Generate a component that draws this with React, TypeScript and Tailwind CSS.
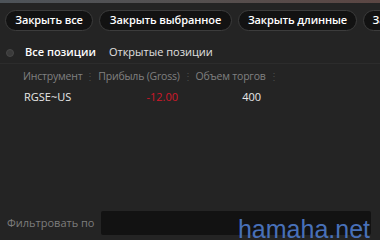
import React from "react";

const font = { fontFamily: '"Open Sans", "Noto Sans", sans-serif' };

function Btn({ label, w }: { label: string; w: string }) {
  return (
    <div
      className={`h-[21px] ${w} shrink-0 rounded-full border border-[#3c3c3c] bg-[#121212] flex items-center justify-center text-[11px] font-semibold text-white whitespace-nowrap tracking-[-0.1px]`}
    >
      {label}
    </div>
  );
}

function Sep() {
  return <span className="text-[#4a4a4a] text-[10px] mx-[3px]">⋮</span>;
}

export default function App() {
  return (
    <div className="w-[380px] h-[240px] bg-[#242424] relative overflow-hidden flex flex-col" style={font}>
      <div className="h-[3px] w-full bg-gradient-to-r from-[#4d5359] via-[#545050] to-[#5b4643]" />
      <div className="flex gap-[6px] pl-[5px] pt-[7px]">
        <Btn label="Закрыть все" w="w-[88px]" />
        <Btn label="Закрыть выбранное" w="w-[133px]" />
        <Btn label="Закрыть длинные" w="w-[119px]" />
        <Btn label="Закрыть короткие" w="w-[120px]" />
      </div>
      <div className="flex items-center pl-[6px] pt-[11px] h-[33px] border-b border-[#2c2c2c]">
        <div className="w-[8px] h-[8px] rounded-full bg-[#3a3a3a] border border-[#474747]" />
        <span className="ml-[11px] text-[11px] font-semibold text-white">Все позиции</span>
        <span className="ml-[13px] text-[11px] text-[#e0e0e0]">Открытые позиции</span>
      </div>
      <div className="flex items-center pl-[23px] pt-[5px] text-[10.5px] tracking-[-0.2px] text-[#808080] whitespace-nowrap">
        <span>Инструмент</span>
        <Sep />
        <span>Прибыль (Gross)</span>
        <Sep />
        <span>Объем торгов</span>
        <Sep />
      </div>
      <div className="flex items-center pt-[4px] text-[11px]">
        <span className="pl-[24px] w-[100px] text-[#e8e8e8]">RGSE~US</span>
        <span className="w-[78px] text-right text-[#d0182a]">-12.00</span>
        <span className="w-[83px] text-right text-[#e8e8e8]">400</span>
      </div>
      <div className="flex-1" />
      <div className="flex items-center pl-[7px] pb-[5px]">
        <span className="text-[11px] text-[#7d7d7d] w-[94px] whitespace-nowrap">Фильтровать по</span>
        <div className="h-[24px] w-[270px] bg-[#121212] rounded-[2px]" />
      </div>
      <div
        className="absolute right-[10px] bottom-[-2px] text-[25px] text-[#4870b8] leading-none"
        style={{ fontFamily: '"Liberation Sans", Arial, sans-serif' }}
      >
        hamaha.net
      </div>
    </div>
  );
}
